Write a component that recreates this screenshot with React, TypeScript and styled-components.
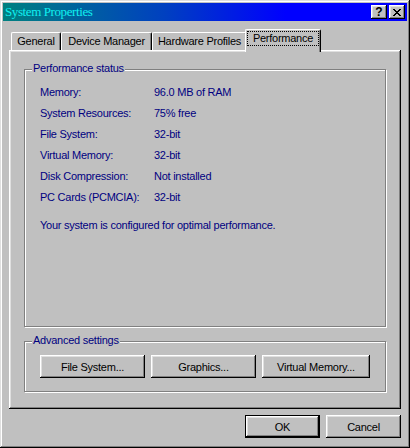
import React from "react";
import styled, { createGlobalStyle } from "styled-components";

const Global = createGlobalStyle`
  html, body { margin: 0; padding: 0; background: #c0c0c0; }
  body { font-family: "Liberation Sans", Arial, sans-serif; font-size: 11px; letter-spacing: -0.25px; }
  * { box-sizing: border-box; }
`;

const raised = `
  box-shadow: inset -1px -1px #000, inset 1px 1px #fff, inset -2px -2px #808080, inset 2px 2px #dfdfdf;
`;

const Window = styled.div`
  width: 410px;
  height: 448px;
  padding: 3px;
  background: #c0c0c0;
  box-shadow: inset -1px -1px #000, inset 1px 1px #dfdfdf, inset -2px -2px #808080, inset 2px 2px #fff;
  display: flex;
  flex-direction: column;
`;

const TitleBar = styled.div`
  height: 18px;
  display: flex;
  align-items: center;
  padding: 0 2px 0 2px;
  background: linear-gradient(90deg, #008080 0%, #0040c0 40%, #0000ff 70%, #0000ff 100%);
`;

const Title = styled.span`
  flex: 1;
  font-family: "Liberation Serif", "Times New Roman", serif;
  font-size: 13px;
  letter-spacing: -0.4px;
  line-height: 18px;
  color: #10f0f0;
  white-space: nowrap;
`;

const TitleButton = styled.button`
  width: 16px;
  height: 14px;
  padding: 0;
  border: none;
  background: #c0c0c0;
  display: flex;
  align-items: center;
  justify-content: center;
  font-family: "Liberation Sans", Arial, sans-serif;
  font-weight: bold;
  font-size: 12px;
  line-height: 12px;
  color: #000;
  & + & { margin-left: 2px; }
  box-shadow: inset -1px -1px #000, inset 1px 1px #fff, inset -2px -2px #808080, inset 2px 2px #dfdfdf;
`;

const TabStrip = styled.div`
  height: 21px;
  margin: 8px 6px 0;
  padding-left: 2px;
  display: flex;
  align-items: flex-end;
`;

const Tab = styled.div<{ $w: number; $active?: boolean }>`
  position: relative;
  width: ${(p) => p.$w}px;
  height: ${(p) => (p.$active ? 23 : 18)}px;
  margin: ${(p) => (p.$active ? "0 -2px -2px -2px" : "0")};
  z-index: ${(p) => (p.$active ? 2 : 0)};
  background: #c0c0c0;
  border-top: 1px solid #fff;
  border-left: 1px solid #fff;
  border-right: 1px solid #000;
  border-radius: 2px 2px 0 0;
  box-shadow: inset -1px 0 #808080;
  padding-top: ${(p) => (p.$active ? 1 : 2)}px;
  text-align: center;
  line-height: 13px;
  color: #000;
  white-space: nowrap;
`;

const Focus = styled.span`
  display: block;
  height: 15px;
  margin: 0 1px;
  border: 1px dotted #000;
  line-height: 13px;
`;

const Panel = styled.div`
  height: 359px;
  margin: 0 6px;
  padding: 19px 15px 0;
  box-shadow: inset -1px -1px #000, inset 1px 1px #fff, inset -2px -2px #808080, inset 2px 2px #dfdfdf;
`;

const Group = styled.div<{ $h?: number }>`
  position: relative;
  height: ${(p) => (p.$h ? `${p.$h}px` : "auto")};
  border: 1px solid #808080;
  box-shadow: inset 1px 1px #fff, 1px 1px #fff;
  & + & { margin-top: 14px; }
`;

const Legend = styled.span`
  position: absolute;
  top: -8px;
  left: 7px;
  padding: 0 1px;
  background: #c0c0c0;
  color: #000080;
  line-height: 13px;
`;

const InfoGrid = styled.div`
  display: grid;
  grid-template-columns: 114px auto;
  grid-auto-rows: 21px;
  padding: 12px 0 0 15px;
  color: #000080;
  line-height: 21px;
`;

const Note = styled.div`
  padding: 7px 0 0 15px;
  color: #000080;
  line-height: 21px;
`;

const ButtonRow = styled.div`
  display: flex;
  gap: 6px;
  padding: 13px 0 13px 15px;
`;

const Button = styled.button<{ $w: number; $default?: boolean }>`
  width: ${(p) => p.$w}px;
  height: 23px;
  padding: 0;
  background: #c0c0c0;
  border: ${(p) => (p.$default ? "1px solid #000" : "none")};
  font-family: "Liberation Sans", Arial, sans-serif;
  font-size: 11px;
  letter-spacing: -0.25px;
  color: #000;
  ${raised}
`;

const Footer = styled.div`
  display: flex;
  justify-content: flex-end;
  gap: 6px;
  margin-top: 6px;
  padding-right: 6px;
`;

const rows: [string, string][] = [
  ["Memory:", "96.0 MB of RAM"],
  ["System Resources:", "75% free"],
  ["File System:", "32-bit"],
  ["Virtual Memory:", "32-bit"],
  ["Disk Compression:", "Not installed"],
  ["PC Cards (PCMCIA):", "32-bit"],
];

const CloseGlyph = () => (
  <svg width="8" height="7" viewBox="0 0 8 7" shapeRendering="crispEdges">
    <path
      fill="#000"
      d="M0 0h2v1h-2zM6 0h2v1h-2zM1 1h2v1h-2zM5 1h2v1h-2zM2 2h4v1h-4zM3 3h2v1h-2zM2 4h4v1h-4zM1 5h2v1h-2zM5 5h2v1h-2zM0 6h2v1h-2zM6 6h2v1h-2z"
    />
  </svg>
);

export default function App() {
  return (
    <>
      <Global />
      <Window>
        <TitleBar>
          <Title>System Properties</Title>
          <TitleButton>?</TitleButton>
          <TitleButton>
            <CloseGlyph />
          </TitleButton>
        </TitleBar>
        <TabStrip>
          <Tab $w={50}>General</Tab>
          <Tab $w={91}>Device Manager</Tab>
          <Tab $w={95}>Hardware Profiles</Tab>
          <Tab $w={76} $active>
            <Focus>Performance</Focus>
          </Tab>
        </TabStrip>
        <Panel>
          <Group $h={258}>
            <Legend>Performance status</Legend>
            <InfoGrid>
              {rows.map(([k, v]) => (
                <React.Fragment key={k}>
                  <span>{k}</span>
                  <span>{v}</span>
                </React.Fragment>
              ))}
            </InfoGrid>
            <Note>Your system is configured for optimal performance.</Note>
          </Group>
          <Group>
            <Legend>Advanced settings</Legend>
            <ButtonRow>
              <Button $w={105}>File System...</Button>
              <Button $w={105}>Graphics...</Button>
              <Button $w={108}>Virtual Memory...</Button>
            </ButtonRow>
          </Group>
        </Panel>
        <Footer>
          <Button $w={75} $default>OK</Button>
          <Button $w={75}>Cancel</Button>
        </Footer>
      </Window>
    </>
  );
}
